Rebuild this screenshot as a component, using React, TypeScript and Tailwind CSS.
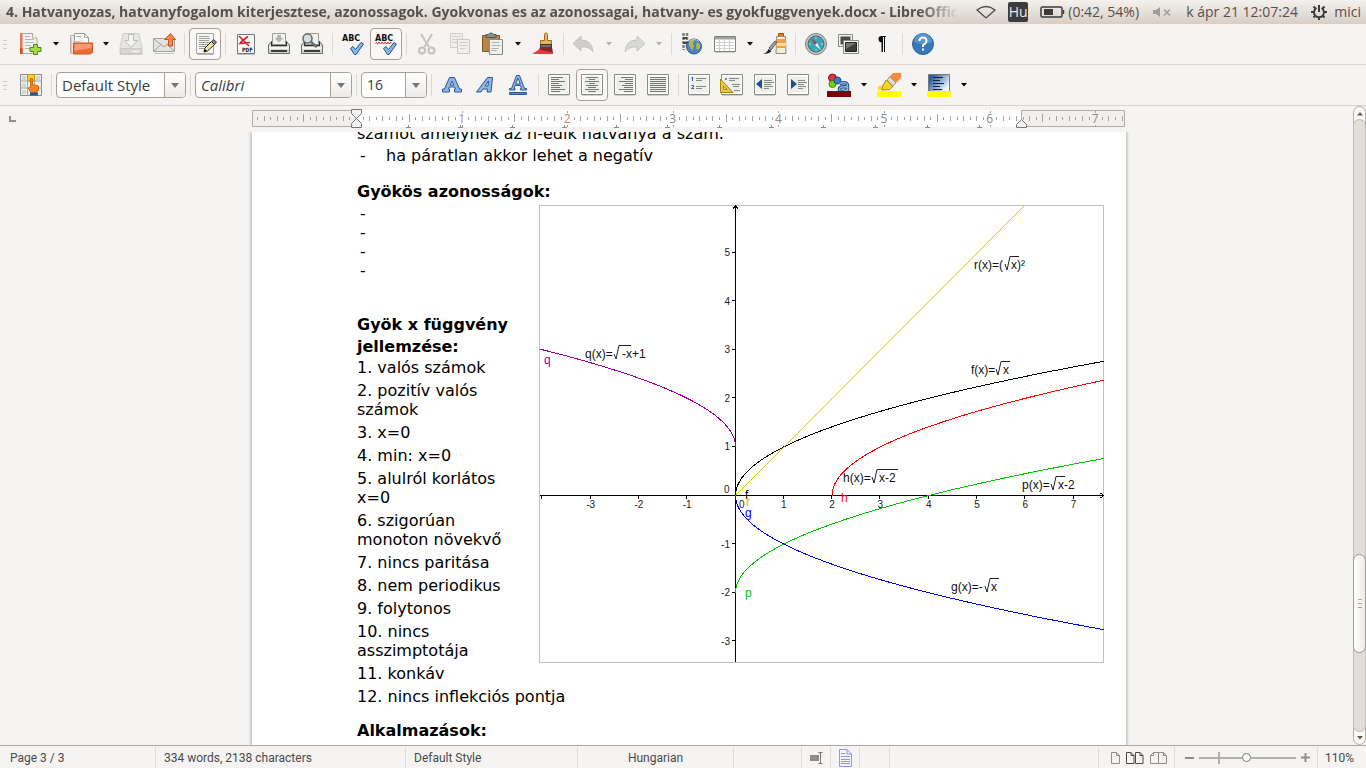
import type { ReactNode } from "react";

/* ---------- icon helpers ---------- */

function Icon({ children }: { children: ReactNode }) {
  return (
    <svg width="24" height="24" viewBox="0 0 24 24" fill="none" aria-hidden="true" className="shrink-0">
      {children}
    </svg>
  );
}

const NewDoc = (
  <Icon>
    <path d="M2.500 1.500h11l4.500 4.500v15.500h-15.500z" fill="#f1f1ef" stroke="#a9a9a5" />
    <path d="M1 1h2.500v21H1z" fill="#e8764a" />
    <path d="M1 16h2.500v6H1z" fill="#d9481a" />
    <path d="M13.500 1.500v4.500h4.500" fill="#fff" stroke="#a9a9a5" />
    <path d="M6 4.500h5M6 7.500h9M6 10.500h9M6 13.500h6M6 16.500h5" stroke="#b4b4b0" />
    <path d="M14.500 12.500h4v3h3.500v4h-3.500v3h-4v-3h-3.500v-4h3.500z" fill="#a3dc4a" stroke="#4e8a06" strokeLinejoin="round" />
  </Icon>
);
const OpenDoc = (
  <Icon>
    <path d="M1.500 21V3.500h5v17.500z" fill="#e9e9e7" stroke="#b5b5b1" />
    <path d="M5.500 12V1.500h10l4 4V12z" fill="#fafafa" stroke="#9b9b97" />
    <path d="M15.500 1.500v4h4M7.500 4.500h5" stroke="#a8a8a4" />
    <path d="M4.500 9.500h7l2-2" stroke="#c9c9c5" />
    <path d="M2 21.500V6" stroke="#e39a7c" />
    <path d="M4.500 22v-11h19v8q0 3-3 3z" fill="#ee6a34" stroke="#cf5220" />
    <path d="M5.500 12h17v4q-8 1-17 3z" fill="#f69c74" />
  </Icon>
);
const Save = (
  <Icon>
    <path d="M4 1.500h16l3 14v7H1v-7z" fill="#e6e5e3" stroke="#cfcecb" />
    <path d="M1.500 16.500h21v5h-21z" fill="#dad9d6" stroke="#cbcac6" />
    <path d="M9.500 2.500h5v6h4l-6.500 7-6.500-7h4z" fill="#f4f4f3" stroke="#bdbcb8" />
    <path d="M13 19.500h7" stroke="#f7f7f7" />
  </Icon>
);
const Mail = (
  <Icon>
    <path d="M1.500 6.500h21v13h-21z" fill="#e4e4e1" stroke="#a3a39f" />
    <path d="M2 19l7.500-7M22 19l-7.500-7M2 7l10 8 10-8" stroke="#a0a09b" />
    <path d="M2.500 21.500h20" stroke="#c9c7c4" />
    <path d="M16.500 14V7.500h-4l6-6 5 6h-3V14z" fill="#f58b50" stroke="#c94f16" />
  </Icon>
);
const EditDoc = (
  <Icon>
    <path d="M3.500 1.500h17v20h-17z" fill="#f5f5f3" stroke="#a5a5a1" />
    <path d="M6 4.500h10M6 6.500h11M6 8.500h10M6 10.500h11M6 12.500h9M6 14.500h7M6 16.500h6" stroke="#a0a09c" />
    <path d="M4 22.500h17" stroke="#bbb" />
    <path d="M20.500 7.500l3 2.500-2 2.500-3-2.500z" fill="#ad6fa0" stroke="#5a3b54" />
    <path d="M18.500 9.500l3 3-7 6.500-3.500 1 .8-3.800z" fill="#f4e29a" stroke="#222" />
    <path d="M11 20l1-3 2 2z" fill="#111" />
  </Icon>
);
const Pdf = (
  <Icon>
    <path d="M3.500 2.500h17v19h-17z" fill="#f8f8f8" stroke="#777" />
    <path d="M5 4l10 10M14 4.500c-3 2-6 4-8 7l10-1" stroke="#d3222a" strokeWidth="1.600" />
    <text x="8" y="20" fontSize="6" fontWeight="700" fontFamily="DejaVu Sans Mono, monospace" fill="#111">PDF</text>
    <path d="M3 22.500h18" stroke="#bbb" />
  </Icon>
);
const printerBody = (
  <>
    <path d="M1.500 13l3-3.500h15l3 3.500v8.500h-21z" fill="#d5d5d1" stroke="#6b6d69" />
    <path d="M4 9.500h16v5H4z" fill="#2b2d2a" />
    <path d="M2 14.500h20v2.500H2z" fill="#f5f5f3" />
    <path d="M4 18h16v2H4z" fill="#3b3d3a" />
  </>
);
const Print = (
  <Icon>
    {printerBody}
    <path d="M5.500 1.500h13v11h-13z" fill="#f1f1ef" stroke="#9a9a96" />
    <path d="M10 3h4v3h2.500L12 10.500 7.500 6H10z" fill="#b4b5b1" />
  </Icon>
);
const Preview = (
  <Icon>
    {printerBody}
    <path d="M5.500 1.500h13v11h-13z" fill="#f1f1ef" stroke="#9a9a96" />
    <circle cx="7.500" cy="6.500" r="4.500" fill="#d9e0e4" stroke="#6d6f6b" strokeWidth="1.600" />
    <path d="M11 10l5 4.500" stroke="#6d6f6b" strokeWidth="2.400" strokeLinecap="round" />
  </Icon>
);
function Spell({ wavy }: { wavy?: boolean }) {
  return (
    <Icon>
      <text x="1" y="9" fontSize="8" fontWeight="700" fontFamily="DejaVu Sans, sans-serif" fill="#111">ABC</text>
      {wavy && <path d="M1 11.500l1-1 1.500 1 1.500-1 1.500 1 1.500-1 1.500 1 1.500-1 1.500 1 1.500-1 1.500 1 1.500-1 1 1" stroke="#d40000" />}
      <path d="M9.500 16.500l2.500-2 2.500 3 5.500-7 2.500 1.500-7.500 10.500h-1.500z" fill="#8db8e8" stroke="#22508f" strokeLinejoin="round" />
    </Icon>
  );
}
const Cut = (
  <Icon>
    <path d="M6 2l8 13M17 2L9.500 15" stroke="#c6c5c2" strokeWidth="2.200" />
    <circle cx="7" cy="18.500" r="3" stroke="#c2c1be" strokeWidth="2" />
    <circle cx="16.500" cy="18.500" r="3" stroke="#c2c1be" strokeWidth="2" />
  </Icon>
);
const Copy = (
  <Icon>
    <path d="M2.500 1.500h12v14h-12z" fill="#efeeec" stroke="#d0cfcc" />
    <path d="M4.500 4.500h8M4.500 7.500h6M4.500 10.500h5" stroke="#d0cfcc" />
    <path d="M9.500 7.500h12v14h-12z" fill="#f1f0ef" stroke="#c9c8c5" />
    <path d="M11.500 10.500h8M11.500 13.500h8M11.500 16.500h6" stroke="#d0cfcc" />
  </Icon>
);
const Paste = (
  <Icon>
    <path d="M1.500 3.500h17v16h-17z" fill="#b5874a" stroke="#7b5624" />
    <path d="M5 5.500h10v-3h-2.500q-.5-1.500-2.500-1.500t-2.500 1.500H5z" fill="#8c8e89" stroke="#555753" />
    <path d="M8.500 7.500h13v15h-13z" fill="#f0f1ef" stroke="#888a85" />
    <path d="M10.500 10.500h8M10.500 13.500h9M10.500 16.500h7M10.500 18.500h5" stroke="#b0b1ad" />
  </Icon>
);
const Brush = (
  <Icon>
    <path d="M13.500 2.500q0-1.500 1.500-1.500t1.500 1.500v6h4v4h-11v-4h4z" fill="#e9b25f" stroke="#a66a18" />
    <path d="M9.500 12.500h11v3h-11z" fill="#6e6f6c" stroke="#333" />
    <path d="M9 15h12l1 6H7z" fill="#7d2a2d" />
    <path d="M1 21.500q4-1.500 7-4l14 3V22H9q-4 0-8-.5z" fill="#e8383c" />
  </Icon>
);
const Undo = (
  <Icon>
    <path d="M9 4v4q11 0 12 12-4-6-12-5v4L1 11.500z" fill="#cfcecb" stroke="#c3c2bf" strokeLinejoin="round" />
  </Icon>
);
const Redo = (
  <Icon>
    <path d="M15 4v4Q4 8 3 20q4-6 12-5v4l8-7.500z" fill="#d9d9d6" stroke="#c3c2bf" strokeLinejoin="round" />
  </Icon>
);
const Link = (
  <Icon>
    <path d="M3.500 1v17M7 1v14" stroke="#7f817d" strokeWidth="2.500" strokeDasharray="3 1" />
    <path d="M3 6h4M3 11h4" stroke="#222" strokeWidth="1.500" />
    <circle cx="14" cy="14.500" r="7.500" fill="#4f7fbd" stroke="#2f558c" />
    <path d="M9 10q3-4 6-2l-2 3 1 3-2 5q-1-4-3-5zM17 10l3 2v4l-3 2-1-4z" fill="#b3b74b" />
    <path d="M9 9.500q5-4 10 0" stroke="#a8c6ea" />
  </Icon>
);
const TableIcon = (
  <Icon>
    <path d="M1.500 4.500h21v15h-21z" fill="#fff" stroke="#80827d" />
    <path d="M2 5h20v2.500H2z" fill="#a3a49f" />
    <path d="M3 10.500h18M3 13.500h18M3 16.500h18M6.500 8v11M11.500 8v11M16.500 8v11" stroke="#cfd0cc" />
    <path d="M2 20.500h20" stroke="#d0cfcc" />
  </Icon>
);
const Draw = (
  <Icon>
    <path d="M15.500 1.500h5v3h-5z" fill="#f57900" stroke="#9c5400" />
    <path d="M13.500 4.500h9l.5 17h-10z" fill="#f2ecd9" stroke="#8d8a80" />
    <path d="M13.500 7h9.500v9h-9.500z" fill="#f3a13e" />
    <path d="M14 11h9v3h-9z" fill="#fad7a0" />
    <path d="M12 9l2 1-6 8-2-2z" fill="#a3a49f" stroke="#555" />
    <path d="M0 22q4-1 5.500-5l3 2q-2 3-8.500 3z" fill="#222" />
  </Icon>
);
const Compass = (
  <Icon>
    <circle cx="12" cy="12" r="10.500" fill="#c3c5c1" stroke="#7f817c" />
    <circle cx="12" cy="12" r="8" fill="#39a3b8" stroke="#4e6b74" />
    <path d="M12 5v2M12 17v2M5 12h2M17 12h2" stroke="#bfe5ec" />
    <path d="M7 6l6 5-2 2z" fill="#e0262c" />
    <path d="M17 18l-6-5 2-2z" fill="#f4f4f4" />
  </Icon>
);
const Gallery = (
  <Icon>
    <path d="M1.500 2.500h14v12h-14z" fill="#f4f4f3" stroke="#888a85" />
    <path d="M3.500 4.500h10v8h-10z" fill="#4a4b49" />
    <path d="M6.500 8.500h15v13h-15z" fill="#f4f4f3" stroke="#888a85" />
    <path d="M8.500 10.500h11v9h-11z" fill="#3e3f3d" stroke="#222" />
    <path d="M9 11h10l-10 6z" fill="#777875" />
  </Icon>
);
const Pilcrow = (
  <Icon>
    <path d="M16 4h-4.500Q8.500 4 8.500 7t3 3.500V20h1.500V5h1v15h1V5h1z" fill="#111" />
  </Icon>
);
const Help = (
  <Icon>
    <circle cx="12" cy="12" r="10.500" fill="#3a78b8" stroke="#2b5f97" />
    <path d="M3 10a9 9 0 0118 0q-9 4-18 0z" fill="#5b93cb" />
    <path d="M8.500 9q0-3.500 3.500-3.500T15.500 9q0 2-3.500 4v2" stroke="#fff" strokeWidth="2" />
    <path d="M11 16.500h2v2h-2z" fill="#fff" />
  </Icon>
);

const Styles = (
  <Icon>
    <path d="M1.500 1.500h21v21h-21z" fill="#f0f0ed" stroke="#8a8c87" />
    <path d="M8.500 1v22M15.500 1v22M1 8h22M1 15h22" stroke="#a4a6a1" />
    <path d="M3 3h4v4H3zM17 3h4v4h-4zM3 10h4v4H3zM3 17h4v4H3z" fill="#d4d6d2" />
    <path d="M8.500 1.500h7V8h-7z" fill="#f5d327" stroke="#b8980b" />
    <path d="M11.500 5.500h2v6l6 1.500v4L17 20h-5l-2.500-5 2-1z" fill="#f58220" stroke="#d0660c" />
    <path d="M11 19.500h8v3h-8z" fill="#2a5698" />
  </Icon>
);
function Letter({ kind }: { kind: "bold" | "italic" | "underline" }) {
  if (kind === "bold")
    return (
      <Icon>
        <path d="M9.500 4.500h5l5 11.500h2v3h-7v-3h1l-.6-2H9.500l-1 2h1v3H2.500v-3h2zM12 8l-1.800 4h3.600z" fill="#8fb5e3" stroke="#2b5797" fillRule="evenodd" />
      </Icon>
    );
  if (kind === "italic")
    return (
      <Icon>
        <path d="M14.500 4.500h5l-1.500 14.500h-4l.5-3h-4.500l-2 3H3.500zM15.500 8l-3.500 5h3z" fill="#8fb5e3" stroke="#2b5797" fillRule="evenodd" />
      </Icon>
    );
  return (
    <Icon>
      <path d="M10.500 2.500h3l5 13h2v1.500h-6v-1.500h1l-1-3H9l-1 3h1V17H3.500v-1.500h2zM12 5l-2.300 6h4.600z" fill="#8fb5e3" stroke="#2b5797" fillRule="evenodd" />
      <path d="M3.500 19.500h17v2h-17z" fill="#5b8bc9" stroke="#2b5797" />
    </Icon>
  );
}
function Sheet({ children }: { children: ReactNode }) {
  return (
    <Icon>
      <path d="M1.500 1.500h21v20h-21z" fill="#fdfdfc" stroke="#8a8c87" />
      <path d="M3.500 3.500h17v16h-17z" fill="#eceeeb" />
      <path d="M2 22.500h20" stroke="#cfcdca" />
      {children}
    </Icon>
  );
}
const ALIGN_PATHS = {
  left: "M4 4.500h12M4 6.500h8M4 8.500h14M4 10.500h8M4 12.500h11M4 14.500h9M4 16.500h14M4 18.500h9",
  center: "M6 4.500h12M9 6.500h6M5 8.500h14M9 10.500h6M6 12.500h12M8 14.500h8M5 16.500h14M8 18.500h8",
  right: "M8 4.500h12M12 6.500h8M6 8.500h14M12 10.500h8M9 12.500h11M11 14.500h9M6 16.500h14M11 18.500h9",
  justify: "M4 4.500h16M4 6.500h16M4 8.500h16M4 10.500h16M4 12.500h16M4 14.500h16M4 16.500h16M4 18.500h16",
};
function Align({ kind }: { kind: keyof typeof ALIGN_PATHS }) {
  return (
    <Sheet>
      <path d={ALIGN_PATHS[kind]} stroke="#777974" />
    </Sheet>
  );
}
const Numbering = (
  <Sheet>
    <path d="M5.500 4v4M4.500 5h1M4.500 12.500h2v1.500l-2 1.500h2.500" stroke="#2b5797" />
    <path d="M9 5.500h10M9 7.500h6M9 13.500h10M9 15.500h6" stroke="#888a85" />
  </Sheet>
);
const Bullets = (
  <Sheet>
    <path d="M9 5.500h10M9 7.500h6M12 11.500h8M13 13.500h6M14 17.500h6" stroke="#888a85" />
    <path d="M5 5h2v2H5z" fill="#888a85" />
    <path d="M.5 6v13.500H13zM3.500 13v3.500H7z" fill="#edc93b" stroke="#a88506" fillRule="evenodd" />
  </Sheet>
);
const Outdent = (
  <Sheet>
    <path d="M9 6v10l-6-5z" fill="#1f4e96" />
    <path d="M11 7.500h8M11 9.500h10M11 11.500h7M11 13.500h9M11 15.500h5" stroke="#888a85" />
  </Sheet>
);
const Indent = (
  <Sheet>
    <path d="M5 6v10l6-5z" fill="#1f4e96" />
    <path d="M12 7.500h7M12 9.500h9M12 11.500h6M12 13.500h8M12 15.500h5" stroke="#888a85" />
  </Sheet>
);
const FontColor = (
  <Icon>
    <circle cx="5.500" cy="5" r="4" fill="#e0333a" stroke="#8f1217" />
    <circle cx="5.500" cy="11" r="3.500" fill="#73d216" stroke="#3d7d06" />
    <circle cx="10.500" cy="7.500" r="3.500" fill="#3d7bc9" stroke="#204a87" />
    <path d="M12.500 10.500q8-2.500 8 2.500v6M20 14q-8-1-7.500 2.500T20 17" stroke="#204a87" strokeWidth="3.500" />
    <path d="M12.500 10.500q8-2.500 8 2.500v6M20 14q-8-1-7.500 2.500T20 17" stroke="#8fb5e3" strokeWidth="1.500" />
    <path d="M0 18h24v6H0z" fill="#7f0000" />
  </Icon>
);
const Highlight = (
  <Icon>
    <path d="M1 13h7v4H1z" fill="#f4e01c" />
    <path d="M16 0h8v5l-6 6-7-6z" fill="#f58a3c" />
    <path d="M13 4l6 6-3 3-6-6z" fill="#dedfdc" stroke="#9a9b97" />
    <path d="M9.500 7l6.500 6.500-3.500 3-7.500.5 1-5z" fill="#f7d62a" stroke="#a58a0c" />
    <path d="M0 18h24v6H0z" fill="#ffff00" />
  </Icon>
);
const BackColor = (
  <Icon>
    <defs>
      <linearGradient id="backFade" x1="0" y1="0" x2="1" y2="0.600">
        <stop offset="0.200" stopColor="#2c5fa8" />
        <stop offset="1" stopColor="#f4f7fb" />
      </linearGradient>
    </defs>
    <path d="M1.500 1.500h21v17h-21z" fill="url(#backFade)" stroke="#777974" />
    <path d="M6 4.500h10M6 7.500h7M6 10.500h11M6 13.500h7M6 16.500h9" stroke="#14233b" />
    <path d="M0 18h24v6H0z" fill="#ffff00" />
  </Icon>
);

/* ---------- toolbar parts ---------- */

function Tool({ label, active, children }: { label: string; active?: boolean; children: ReactNode }) {
  return (
    <button
      type="button"
      aria-label={label}
      aria-pressed={active}
      className={
        active
          ? "flex size-8 shrink-0 items-center justify-center rounded-[4px] border border-[#aaa098] bg-[#faf9f8]"
          : "flex size-8 shrink-0 items-center justify-center"
      }
    >
      {children}
    </button>
  );
}

function Drop({ label, dim }: { label: string; dim?: boolean }) {
  return (
    <button type="button" aria-label={label} className={dim ? "flex h-8 w-4 shrink-0 items-center justify-center text-[#b5b3b0]" : "flex h-8 w-4 shrink-0 items-center justify-center text-black"}>
      <svg width="6" height="4" viewBox="0 0 6 4" aria-hidden="true">
        <path d="M0 0h6L3 3.500z" fill="currentColor" />
      </svg>
    </button>
  );
}

function Sep() {
  return (
    <span className="flex h-[22px] w-[7px] shrink-0 justify-center">
      <span className="w-px bg-[#dcd9d5]" />
    </span>
  );
}

function Grip() {
  return (
    <span className="mr-[7px] flex w-1 shrink-0 flex-col gap-[3px]">
      <span className="h-px bg-[#d0cdc9]" />
      <span className="h-px bg-[#d0cdc9]" />
      <span className="h-px bg-[#d0cdc9]" />
    </span>
  );
}

function Combo({ label, value, box, text }: { label: string; value: string; box: string; text: string }) {
  return (
    <div className={`flex h-[26px] shrink-0 overflow-hidden rounded-[4px] border border-[#aaa098] bg-white ${box}`}>
      <input aria-label={label} defaultValue={value} className={`min-w-0 flex-1 pl-[5px] text-[#3c3c3c] outline-none ${text}`} />
      <button type="button" aria-label={`${label} list`} className="flex w-[21px] items-center justify-center border-l border-[#aaa098] bg-gradient-to-b from-white to-[#edebe8]">
        <svg width="8" height="5" viewBox="0 0 8 5" aria-hidden="true">
          <path d="M0 0h8L4 5z" fill="#777" />
        </svg>
      </button>
    </div>
  );
}

/* ---------- ruler ---------- */

const INCH = 105.6;
const ORIGIN = 104;

function Ruler() {
  const marks = [];
  for (let i = -15; i < 117; i++) {
    const x = Math.round(ORIGIN + (i * INCH) / 16) + 0.5;
    if (i === 0 || x > 872) continue;
    const step = Math.abs(i) % 16;
    if (step === 0) {
      marks.push(<path key={i} d={`M${x} 1v2M${x} 15v2`} stroke="#a5a3a0" />);
      continue;
    }
    const half = step === 8 ? 4 : step % 2 === 0 ? 2.5 : 1.5;
    const top = Math.round(8 - half);
    marks.push(<path key={i} d={`M${x} ${top}v${half * 2}`} stroke="#a5a3a0" />);
  }
  const tabs = [];
  for (let n = 1; n < 13; n++) {
    const x = Math.round(ORIGIN + n * 51.9) + 0.5;
    tabs.push(<path key={n} d={`M${x} 15v3M${x - 2.5} 17.500h5`} stroke="#8f8d8a" />);
  }
  return (
    <svg width="874" height="20" viewBox="0 0 874 20" fill="none" aria-hidden="true" className="overflow-visible">
      <path d="M104 0h666v17H104z" fill="#fff" />
      <path d="M.5.5h103.500v16H.5zM769.500.5h103v16h-103z" fill="#f2f0ee" stroke="#b0aeab" />
      {marks}
      {tabs}
      {[1, 2, 3, 4, 5, 6, 7].map((n) => (
        <text key={n} x={ORIGIN + n * INCH} y="13" textAnchor="middle" fontSize="12" fontFamily="Open Sans, sans-serif" fill={n < 3 ? "#b08c7c" : "#8a8885"}>
          {n}
        </text>
      ))}
      <path d="M99.500-.5h10v4l-5 5-5-5zM104.500 8.500l5 5v4h-10v-4z" fill="#f5f4f2" stroke="#777" />
      <path d="M769.500 9.500l5 5v3h-10v-3z" fill="#f5f4f2" stroke="#777" />
    </svg>
  );
}

/* ---------- function plot ---------- */

const OX = 196.5;
const OY = 290.5;
const UX = 48.3;
const UY = 48.6;

function curve(from: number, to: number, f: (x: number) => number) {
  const points: string[] = [];
  for (let i = 0; i <= 60; i++) {
    const t = i / 60;
    const x = from + (to - from) * t * t;
    points.push(`${(OX + x * UX).toFixed(2)},${(OY - f(x) * UY).toFixed(2)}`);
  }
  return points.join(" ");
}

const CURVES = [
  { color: "#000000", points: curve(0, 7.62, (x) => Math.sqrt(x)) },
  { color: "#ff0000", points: curve(2, 7.62, (x) => Math.sqrt(Math.max(0, x - 2))) },
  { color: "#00c800", points: curve(0, 7.62, (x) => Math.sqrt(x) - 2) },
  { color: "#0000ff", points: curve(0, 7.62, (x) => -Math.sqrt(x)) },
  { color: "#a000a0", points: curve(0, -4.05, (x) => Math.sqrt(-x) + 1) },
];

function Plot() {
  return (
    <svg width="565" height="458" viewBox="0 0 565 458" fill="none" role="img" aria-label="Gyökfüggvények" fontFamily="Liberation Sans, Arial, sans-serif">
      <path d="M.5.5h564v457H.5z" fill="#fff" stroke="#c0c0c0" shapeRendering="crispEdges" />
      <g shapeRendering="crispEdges" stroke="#000">
        <path d="M196.500 1v456M1 290.500h563" />
        {[-4, -3, -2, -1, 1, 2, 3, 4, 5, 6, 7].map((n) => (
          <path key={n} d={`M${Math.round(OX + n * UX) - 0.5} 291v3`} />
        ))}
        {[-3, -2, -1, 1, 2, 3, 4, 5].map((n) => (
          <path key={n} d={`M193 ${Math.round(OY - n * UY) - 0.5}h3`} />
        ))}
        <path d="M194 3.500l2.500-2.500 2.500 2.500M561.500 288l3 2.500-3 2.500" />
      </g>
      {CURVES.map((c) => (
        <polyline key={c.color} points={c.points} stroke={c.color} shapeRendering="crispEdges" />
      ))}
      <path d={`M${OX} ${OY}L485 1`} stroke="#cccc00" />
      <g fontSize="10" fill="#222">
        {[-3, -2, -1, 1, 2, 3, 4, 5, 6, 7].map((n) => (
          <text key={n} x={OX + n * UX} y="303" textAnchor="middle">{n}</text>
        ))}
        {[-3, -2, -1, 1, 2, 3, 4, 5].map((n) => (
          <text key={n} x="191" y={OY - n * UY + 3.5} textAnchor="end">{n}</text>
        ))}
        <text x="185" y="288">0</text>
        <text x="200" y="303">0</text>
      </g>
      <g fontSize="12" fill="#111">
        <text x="46" y="153">q(x)=</text>
        <text x="83" y="153">-x+1</text>
        <text x="435" y="64">r(x)=(</text>
        <text x="472" y="64">x)²</text>
        <text x="432" y="169">f(x)=</text>
        <text x="464" y="169">x</text>
        <text x="304" y="277">h(x)=</text>
        <text x="340" y="277">x-2</text>
        <text x="483" y="284">p(x)=</text>
        <text x="519" y="284">x-2</text>
        <text x="412" y="386">g(x)=-</text>
        <text x="452" y="386">x</text>
      </g>
      <g stroke="#222">
        <path d="M75 149l2 5 3-13.500h12" />
        <path d="M466 59l2 6 3-13.500h9" />
        <path d="M457 164l2 6 3-13.500h9" />
        <path d="M333 272l2 6 3-13.500h21" />
        <path d="M512 279l2 6 3-13.500h9" />
        <path d="M446 381l2 6 3-13.500h9" />
      </g>
      <g fontSize="12">
        <text x="5" y="159" fill="#a000a0">q</text>
        <text x="206" y="294" fill="#000">f</text>
        <text x="207" y="301" fill="#c8c800">r</text>
        <text x="206" y="312" fill="#0000ff">g</text>
        <text x="206" y="392" fill="#00c800">p</text>
        <text x="302" y="297" fill="#ff0000">h</text>
      </g>
    </svg>
  );
}

/* ---------- document ---------- */

const PROPERTIES = [
  "1. valós számok",
  "2. pozitív valós számok",
  "3. x=0",
  "4. min: x=0",
  "5. alulról korlátos x=0",
  "6. szigorúan monoton növekvő",
  "7. nincs paritása",
  "8. nem periodikus",
  "9. folytonos",
  "10. nincs asszimptotája",
  "11. konkáv",
  "12. nincs inflekciós pontja",
];

function DocumentPage() {
  return (
    <article className="mx-auto h-full w-[874px] shrink-0 bg-white pr-[22px] pl-[105px] font-['DejaVu_Sans',sans-serif] text-base leading-[19px] text-black shadow-[0_0_3px_1px_#b4b1ae]">
      <div className="-mt-2">
        <p>számot amelynek az n-edik hatványa a szám.</p>
        <ul className="mt-[3px] mb-[17px]">
          <li className="flex">
            <span className="w-[29px] pl-[3px]">-</span>ha páratlan akkor lehet a negatív
          </li>
        </ul>
        <h2 className="mb-[3px] font-bold">Gyökös azonosságok:</h2>
        <figure className="float-right mt-px ml-3">
          <Plot />
        </figure>
        <ul className="mb-[34px] pl-[3px]">
          <li>-</li>
          <li>-</li>
          <li>-</li>
          <li>-</li>
        </ul>
        <h2 className="leading-[22px] font-bold">Gyök x függvény jellemzése:</h2>
        {PROPERTIES.map((line) => (
          <p key={line} className="mb-1">{line}</p>
        ))}
        <h2 className="mt-[15px] font-bold">Alkalmazások:</h2>
      </div>
    </article>
  );
}

function StatusCell({ className, children }: { className: string; children?: ReactNode }) {
  return (
    <div className={`flex h-[22px] items-center ${className}`}>
      {children}
    </div>
  );
}

export default function App() {
  return (
    <div className="flex h-screen flex-col overflow-hidden bg-[#f5f4f2] font-['Open_Sans',sans-serif] text-[#4a4744]">
      <header className="flex h-6 shrink-0 items-center bg-gradient-to-b from-[#f4f1ee] to-[#d8cec6] pr-[5px] pl-[6px] text-sm">
        <h1 className="min-w-0 flex-1 overflow-hidden text-sm font-bold whitespace-nowrap text-[#57504a] [mask-image:linear-gradient(to_right,black_95%,transparent_99%)]">
          4. Hatvanyozas, hatvanyfogalom kiterjesztese, azonossagok. Gyokvonas es az azonossagai, hatvany- es gyokfuggvenyek.docx - LibreOffice Writer
        </h1>
        <div className="flex shrink-0 items-center text-[#57504a]">
          <svg width="20" height="14" viewBox="0 0 20 14" fill="none" className="mr-3 ml-2" aria-label="Network">
            <path d="M1 5q9-7 18 0l-9 8z" stroke="#4a4a4a" strokeWidth="1.300" />
          </svg>
          <span className="mr-3 flex size-5 items-center justify-center rounded-[2px] bg-[#3c3c3c] text-sm text-[#eeebe7]">Hu</span>
          <svg width="25" height="12" viewBox="0 0 25 12" fill="none" className="mr-[3px]" aria-label="Battery">
            <rect x="1" y="1" width="21" height="10" rx="1.500" stroke="#3c3c3c" strokeWidth="1.500" />
            <path d="M4 3h9v6H4z" fill="#3c3c3c" />
            <path d="M23.500 4v4" stroke="#3c3c3c" strokeWidth="1.500" />
          </svg>
          <span className="w-[85px]">(0:42, 54%)</span>
          <svg width="18" height="12" viewBox="0 0 18 12" fill="none" className="mr-[15px]" aria-label="Muted">
            <path d="M0 4h3l4-3v10L3 8H0z" fill="#a19c97" />
            <path d="M11 3.500l6 6M17 3.500l-6 6" stroke="#a19c97" strokeWidth="1.500" />
          </svg>
          <span className="w-[125px]">k ápr 21 12:07:24</span>
          <svg width="16" height="16" viewBox="0 0 16 16" fill="none" className="mr-[7px]" aria-label="Session">
            <path d="M5.500 4a5 5 0 105 0" stroke="#3c3c3c" strokeWidth="2" />
            <path d="M8 1v7" stroke="#3c3c3c" strokeWidth="2" />
            <path d="M0 8h3M13 8h3M8 13v3M2.500 2.500l2 2M13.500 2.500l-2 2M2.500 13.500l2-2M13.500 13.500l-2-2" stroke="#3c3c3c" strokeWidth="2" />
          </svg>
          <span>mici</span>
        </div>
      </header>

      <nav aria-label="Standard" className="flex h-[41px] shrink-0 items-center gap-px border-b border-[#dad7d2] pl-[3px]">
        <Grip />
        <Tool label="New">{NewDoc}</Tool>
        <Drop label="New options" />
        <Tool label="Open">{OpenDoc}</Tool>
        <Drop label="Recent files" />
        <Tool label="Save">{Save}</Tool>
        <Tool label="E-mail">{Mail}</Tool>
        <Sep />
        <Tool label="Edit file" active>{EditDoc}</Tool>
        <Sep />
        <Tool label="Export as PDF">{Pdf}</Tool>
        <Tool label="Print">{Print}</Tool>
        <Tool label="Print preview">{Preview}</Tool>
        <Sep />
        <Tool label="Spelling"><Spell /></Tool>
        <Tool label="AutoSpellcheck" active><Spell wavy /></Tool>
        <Sep />
        <Tool label="Cut">{Cut}</Tool>
        <Tool label="Copy">{Copy}</Tool>
        <Tool label="Paste">{Paste}</Tool>
        <Drop label="Paste options" />
        <Tool label="Clone formatting">{Brush}</Tool>
        <Sep />
        <Tool label="Undo">{Undo}</Tool>
        <Drop label="Undo list" dim />
        <Tool label="Redo">{Redo}</Tool>
        <Drop label="Redo list" dim />
        <Sep />
        <Tool label="Hyperlink">{Link}</Tool>
        <Tool label="Table">{TableIcon}</Tool>
        <Drop label="Table size" />
        <Tool label="Show draw functions">{Draw}</Tool>
        <Sep />
        <Tool label="Navigator">{Compass}</Tool>
        <Tool label="Gallery">{Gallery}</Tool>
        <Tool label="Formatting marks">{Pilcrow}</Tool>
        <Sep />
        <Tool label="Help">{Help}</Tool>
      </nav>

      <nav aria-label="Formatting" className="flex h-[41px] shrink-0 items-center gap-px border-b border-[#d8d3cd] pl-[3px]">
        <Grip />
        <Tool label="Styles and formatting">{Styles}</Tool>
        <Sep />
        <Combo label="Paragraph style" value="Default Style" box="w-[130px]" text="text-[15px]" />
        <Sep />
        <Combo label="Font name" value="Calibri" box="w-[157px]" text="text-[15px] italic" />
        <Sep />
        <Combo label="Font size" value="16" box="w-[66px]" text="text-sm" />
        <Sep />
        <Tool label="Bold"><Letter kind="bold" /></Tool>
        <Tool label="Italic"><Letter kind="italic" /></Tool>
        <Tool label="Underline"><Letter kind="underline" /></Tool>
        <Sep />
        <Tool label="Align left"><Align kind="left" /></Tool>
        <Tool label="Centre" active><Align kind="center" /></Tool>
        <Tool label="Align right"><Align kind="right" /></Tool>
        <Tool label="Justify"><Align kind="justify" /></Tool>
        <Sep />
        <Tool label="Numbering">{Numbering}</Tool>
        <Tool label="Bullets">{Bullets}</Tool>
        <Tool label="Decrease indent">{Outdent}</Tool>
        <Tool label="Increase indent">{Indent}</Tool>
        <Sep />
        <Tool label="Font colour">{FontColor}</Tool>
        <Drop label="Font colours" />
        <Tool label="Highlighting">{Highlight}</Tool>
        <Drop label="Highlight colours" />
        <Tool label="Background colour">{BackColor}</Tool>
        <Drop label="Background colours" />
      </nav>

      <div className="flex min-h-0 flex-1">
        <main className="flex min-w-0 flex-1 flex-col">
          <div className="flex h-[26px] shrink-0 items-start pt-1">
            <span className="flex w-[25px] shrink-0 pt-[6px] pl-[9px]">
              <span className="h-[6px] w-[7px] border-b-2 border-l-2 border-[#8f8d8a]" />
            </span>
            <div className="flex min-w-0 flex-1 justify-center">
              <Ruler />
            </div>
          </div>
          <div className="flex min-h-0 flex-1 overflow-hidden pl-[25px]">
            <DocumentPage />
          </div>
        </main>
        <div className="flex w-[13px] shrink-0 flex-col rounded-[7px] border border-[#b5aca4] bg-[#fbfaf9]">
          <button type="button" aria-label="Scroll up" className="flex h-[13px] items-center justify-center">
            <svg width="6" height="4" viewBox="0 0 6 4" aria-hidden="true"><path d="M0 3.500h6L3 0z" fill="#5c5955" /></svg>
          </button>
          <div className="flex flex-1 flex-col rounded-[6px] bg-[#e2ddd8] ring-1 ring-[#c4bcb5]">
            <span className="grow-[436]" />
            <span className="-mx-px flex h-[99px] flex-col items-center justify-center gap-[3px] rounded-[7px] border border-[#a39a92] bg-gradient-to-r from-white to-[#eeebe8]">
              <span className="h-px w-[4px] bg-[#aaa49e]" />
              <span className="h-px w-[4px] bg-[#aaa49e]" />
              <span className="h-px w-[4px] bg-[#aaa49e]" />
            </span>
            <span className="grow-[78]" />
          </div>
          <button type="button" aria-label="Scroll down" className="flex h-[13px] items-center justify-center">
            <svg width="6" height="4" viewBox="0 0 6 4" aria-hidden="true"><path d="M0 0h6L3 3.500z" fill="#5c5955" /></svg>
          </button>
        </div>
      </div>

      <footer className="flex h-[23px] shrink-0 items-center border-t border-[#aba8a5] pt-px font-[Roboto,sans-serif] text-xs text-[#4a4a48]">
        <StatusCell className="w-[155px] pl-[10px]">Page 3 / 3</StatusCell>
        <StatusCell className="w-[250px] border-l border-[#dedbd8] pl-2">334 words, 2138 characters</StatusCell>
        <StatusCell className="w-[172px] border-l border-[#dedbd8] pl-2">Default Style</StatusCell>
        <StatusCell className="w-[156px] justify-center border-l border-[#dedbd8]">Hungarian</StatusCell>
        <StatusCell className="w-[68px] border-l border-[#dedbd8]" />
        <StatusCell className="w-[29px] justify-center border-l border-[#dedbd8]">
          <svg width="14" height="14" viewBox="0 0 14 14" fill="none" aria-label="Selection mode">
            <path d="M1 4h9v6H1z" fill="#8f8d8a" />
            <path d="M9.500 1.500h4M9.500 12.500h4M11.500 1v12" stroke="#777" />
          </svg>
        </StatusCell>
        <StatusCell className="w-[29px] justify-center border-l border-[#dedbd8]">
          <svg width="15" height="18" viewBox="0 0 15 18" fill="none" aria-label="Document modified">
            <path d="M1.500.5h7.500l4.500 4.500v12.500h-12z" fill="#f4f4ff" stroke="#9494e0" />
            <path d="M9 .5V5h4.500M3 4.500h4M3 7.500h9M3 10.500h9M3 12.500h9M3 14.500h9" stroke="#9494e0" />
          </svg>
        </StatusCell>
        <StatusCell className="w-[30px] border-l border-[#dedbd8]" />
        <StatusCell className="flex-1 border-l border-[#dedbd8]" />
        <StatusCell className="w-[76px] gap-[6px] border-l border-[#dedbd8] pl-3">
          <button type="button" aria-label="Single page">
            <svg width="9" height="12" viewBox="0 0 9 12" fill="none"><path d="M.5.5h5l3 3v8h-8zM5.500.5v3h3" stroke="#908e8b" /></svg>
          </button>
          <button type="button" aria-label="Multiple pages">
            <svg width="18" height="12" viewBox="0 0 18 12" fill="none"><path d="M.5.5h4.500l3 3v8H.5zM5 .5v3h3M9.500.5H14l3 3v8H9.500zM14 .5v3h3" stroke="#4d4b49" /></svg>
          </button>
          <button type="button" aria-label="Book view">
            <svg width="17" height="12" viewBox="0 0 17 12" fill="none"><path d="M8.500.5h-5l-3 3v8h8zM3.500.5v3h-3M8.500.5h5l3 3v8h-8zM13.500.5v3h3" stroke="#908e8b" /></svg>
          </button>
        </StatusCell>
        <StatusCell className="w-[143px] border-l border-[#dedbd8] pl-[10px]">
          <button type="button" aria-label="Zoom out" className="flex h-4 w-[9px] items-center">
            <span className="h-[2px] w-full bg-[#8f8d8a]" />
          </button>
          <div className="relative mx-[5px] flex w-[97px] items-center">
            <span className="absolute left-[19px] h-3 w-[2px] bg-[#b3b1ae]" />
            <input
              type="range"
              aria-label="Zoom"
              min={0}
              max={100}
              defaultValue={49}
              className="relative h-[2px] w-full appearance-none bg-[#b3b1ae] [&::-webkit-slider-thumb]:size-[9px] [&::-webkit-slider-thumb]:appearance-none [&::-webkit-slider-thumb]:rounded-full [&::-webkit-slider-thumb]:border [&::-webkit-slider-thumb]:border-[#777] [&::-webkit-slider-thumb]:bg-white"
            />
          </div>
          <button type="button" aria-label="Zoom in">
            <svg width="9" height="9" viewBox="0 0 9 9" fill="none"><path d="M0 4.500h9M4.500 0v9" stroke="#8f8d8a" strokeWidth="2" /></svg>
          </button>
        </StatusCell>
        <StatusCell className="w-[49px] border-l border-[#dedbd8] pl-[7px]">110%</StatusCell>
      </footer>
    </div>
  );
}
